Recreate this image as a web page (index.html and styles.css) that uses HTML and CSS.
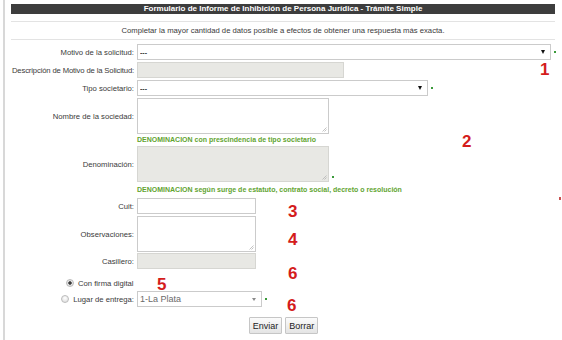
FILE: index.html
```html
<!DOCTYPE html>
<html lang="es">
<head>
<meta charset="utf-8">
<title>Formulario de Informe de Inhibición</title>
<link rel="stylesheet" href="styles.css">
</head>
<body>
<div class="page">
  <div class="title">Formulario de Informe de Inhibición de Persona Jurídica - Trámite Simple</div>
  <p class="intro">Completar la mayor cantidad de datos posible a efectos de obtener una respuesta más exacta.</p>
  <form class="form">
    <label class="lbl">Motivo de la solicitud:</label>
    <div class="field"><div class="sel w-motivo"><select class="sel-in"><option>---</option></select><span class="arrow"></span></div><span class="req"></span></div>

    <label class="lbl narrow">Descripción de Motivo de la Solicitud:</label>
    <div class="field"><input class="inp gray w-desc" type="text" readonly></div>

    <label class="lbl">Tipo societario:</label>
    <div class="field"><div class="sel w-tipo"><select class="sel-in"><option>---</option></select><span class="arrow"></span></div><span class="req"></span></div>

    <label class="lbl">Nombre de la sociedad:</label>
    <div class="field"><span class="ta-wrap"><textarea class="ta w-nombre"></textarea><svg class="grip" width="5" height="5" viewBox="0 0 5 5"><path d="M0.5 4.5 L4.5 0.5 M2.5 4.5 L4.5 2.5" stroke="#b4b4b4" stroke-width="0.8" fill="none"/></svg></span></div>

    <div class="hint">DENOMINACION con prescindencia de tipo societario</div>

    <label class="lbl">Denominación:</label>
    <div class="field bottom"><span class="ta-wrap"><textarea class="ta gray w-denom" readonly></textarea><svg class="grip" width="5" height="5" viewBox="0 0 5 5"><path d="M0.5 4.5 L4.5 0.5 M2.5 4.5 L4.5 2.5" stroke="#b4b4b4" stroke-width="0.8" fill="none"/></svg></span><span class="req low"></span></div>

    <div class="hint tall">DENOMINACION según surge de estatuto, contrato social, decreto o resolución</div>

    <label class="lbl">Cuit:</label>
    <div class="field"><input class="inp w-small" type="text"></div>

    <label class="lbl">Observaciones:</label>
    <div class="field"><span class="ta-wrap"><textarea class="ta w-small"></textarea><svg class="grip" width="5" height="5" viewBox="0 0 5 5"><path d="M0.5 4.5 L4.5 0.5 M2.5 4.5 L4.5 2.5" stroke="#b4b4b4" stroke-width="0.8" fill="none"/></svg></span></div>

    <label class="lbl tight">Casillero:</label>
    <div class="field tight"><input class="inp gray w-small" type="text" readonly></div>

    <div class="radio-row"><input class="radio" type="radio" name="entrega" checked><span>Con firma digital</span></div>

    <label class="lbl radio-lbl"><input class="radio" type="radio" name="entrega"><span>Lugar de entrega:</span></label>
    <div class="field"><div class="sel light w-lugar"><select class="sel-in big"><option>1-La Plata</option></select><span class="arrow grey"></span></div><span class="req"></span></div>

    <div class="buttons"><button type="button" class="btn">Enviar</button><button type="button" class="btn">Borrar</button></div>
  </form>
</div>
<span class="note n1">1</span>
<span class="note n2">2</span>
<span class="note n3">3</span>
<span class="note n4">4</span>
<span class="note n6a">6</span>
<span class="note n5">5</span>
<span class="note n6b">6</span>
<span class="edge-mark"></span>
</body>
</html>
```
FILE: styles.css
```css
html, body {
  margin: 0;
  background: #fff;
}
body {
  position: relative;
  font-family: "Liberation Sans", Arial, sans-serif;
  font-size: 7.7px;
  color: #3a3a3a;
  width: 562px;
  height: 340px;
  overflow: hidden;
}
.page {
  margin-left: 3px;
  border-left: 2px solid #d8d8d8;
  height: 340px;
  box-sizing: border-box;
  padding: 4px 7px 0 6px;
}
.title {
  height: 10px;
  background: #3d3d3d;
  color: #fff;
  font-weight: bold;
  font-size: 8px;
  line-height: 10px;
  text-align: center;
  white-space: nowrap;
}
.intro {
  margin: 7px 0 0;
  border-top: 1px solid #e3e3e3;
  border-bottom: 1px solid #e3e3e3;
  line-height: 17px;
  text-align: center;
  white-space: nowrap;
}
.form {
  display: grid;
  grid-template-columns: 123px 1fr;
  column-gap: 3px;
  row-gap: 2px;
  margin-top: 4px;
  align-items: center;
}
.lbl {
  display: flex;
  justify-content: flex-end;
  white-space: nowrap;
}
.lbl.narrow {
  letter-spacing: -0.15px;
}
.field {
  display: flex;
  align-items: center;
}
.field.bottom {
  align-items: flex-end;
}
.tight {
  margin-top: -1px;
}
.sel {
  display: flex;
  align-items: center;
  height: 16px;
  box-sizing: border-box;
  border: 1px solid #cbcbcb;
  background: #fff;
  padding-right: 5px;
}
.sel-in {
  flex: 1;
  appearance: none;
  -webkit-appearance: none;
  border: 0;
  background: transparent;
  margin: 0;
  padding: 0 0 0 2px;
  height: 14px;
  font-family: "Liberation Sans", Arial, sans-serif;
  font-size: 7px;
  font-weight: bold;
  color: #333;
  outline: none;
}
.sel-in.big {
  font-size: 9px;
  font-weight: normal;
  color: #6a6a6a;
}
.arrow {
  width: 0;
  height: 0;
  border-left: 2.5px solid transparent;
  border-right: 2.5px solid transparent;
  border-top: 4px solid #111;
}
.arrow.grey {
  border-left-width: 2px;
  border-right-width: 2px;
  border-top: 3px solid #8a8a8a;
}
.req {
  width: 2px;
  height: 2px;
  background: #3a9a3a;
  margin-left: 3px;
}
.req.low {
  margin-bottom: 4px;
}
.inp {
  height: 16px;
  box-sizing: border-box;
  border: 1px solid #cbcbcb;
  margin: 0;
  padding: 0 2px;
  background: #fff;
  font-family: "Liberation Sans", Arial, sans-serif;
  font-size: 8px;
  outline: none;
}
.ta-wrap {
  position: relative;
  display: block;
}
.ta {
  display: block;
  height: 36px;
  box-sizing: border-box;
  border: 1px solid #cbcbcb;
  margin: 0;
  padding: 1px 2px;
  background: #fff;
  font-family: "Liberation Sans", Arial, sans-serif;
  font-size: 8px;
  outline: none;
  resize: none;
}
.grip {
  position: absolute;
  right: 2px;
  bottom: 2px;
}
.gray {
  background: #e8e8e4;
  border-color: #d6d6d2;
}
.w-motivo { width: 414px; }
.w-desc { width: 207px; }
.w-tipo { width: 291px; }
.w-nombre { width: 192px; }
.w-denom { width: 192px; }
.w-small { width: 119px; }
.w-lugar { width: 125px; }
.hint {
  grid-column: 2;
  color: #62a431;
  font-weight: bold;
  font-size: 7px;
  line-height: 8px;
  white-space: nowrap;
}
.hint.tall {
  line-height: 12px;
}
.radio-row {
  grid-column: 1 / 3;
  display: flex;
  align-items: center;
  gap: 4px;
  height: 12px;
  padding-left: 55px;
  margin-top: 6px;
}
.radio-lbl {
  align-items: center;
  gap: 4px;
}
.radio {
  appearance: none;
  -webkit-appearance: none;
  width: 8px;
  height: 8px;
  margin: 0;
  border-radius: 50%;
  border: 1px solid #bcbcbc;
  background: radial-gradient(circle at 50% 35%, #ffffff 0, #e4e4e4 70%);
  box-sizing: border-box;
}
.radio:checked {
  background: radial-gradient(circle, #3a3a3a 0, #3a3a3a 1.4px, #e8e8e8 2px, #d8d8d8 100%);
}
.buttons {
  grid-column: 1 / 3;
  display: flex;
  justify-content: center;
  gap: 3px;
  margin-top: 8px;
}
.btn {
  height: 17px;
  box-sizing: border-box;
  margin: 0;
  padding: 0 3px;
  border: 1px solid #c6c6c6;
  border-radius: 1px;
  background: linear-gradient(#fbfbfb, #e4e4e4);
  font-family: "Liberation Sans", Arial, sans-serif;
  font-size: 9px;
  color: #222;
}
.note {
  position: absolute;
  font-family: "Liberation Sans", Arial, sans-serif;
  font-weight: bold;
  font-size: 17px;
  line-height: 17px;
  color: #d41c1c;
}
.n1 { left: 540px; top: 61px; }
.n2 { left: 462px; top: 133px; }
.n3 { left: 288px; top: 203px; }
.n4 { left: 288px; top: 231px; }
.n6a { left: 288px; top: 265px; }
.n5 { left: 157px; top: 276px; }
.n6b { left: 287px; top: 297px; }
.edge-mark {
  position: absolute;
  left: 559px;
  top: 197px;
  width: 2px;
  height: 3px;
  background: #c85050;
}
```
